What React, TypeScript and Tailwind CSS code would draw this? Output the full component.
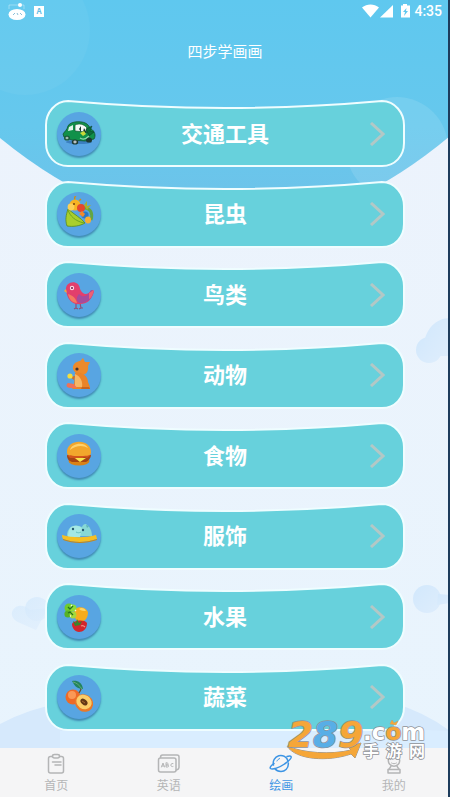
import type { ReactNode } from "react";

type Category = {
  name: string;
  art: ReactNode;
};

type Tab = {
  name: string;
  icon: ReactNode;
  active?: boolean;
};

const CarArt = (
  <>
    <ellipse cx="22" cy="30" rx="13" ry="2" fill="#3b7fbf" />
    <path d="M6 22c2-3 4-4 5-8 2-5 16-6 20-1l3 4c4 2 5 7 3 10l-9 2-13-1-8-3z" fill="#11914a" stroke="#12542f" strokeWidth=".8" />
    <path d="M18 13c4-2 9-1 12 3l-1 4-11-1z" fill="#f4faf8" stroke="#12542f" strokeWidth=".7" />
    <path d="M12 15l4-2v5l-5 1z" fill="#dff3ea" />
    <path d="M22 17l2-3v6zM27 16l3 5-4-1z" fill="#173c2c" />
    <path d="M23 21l4-2 2 3-3 2z" fill="#c8d93a" />
    <path d="M29 17l6-3-2 5 4 1-5 4z" fill="#0c6f3a" stroke="#0b3f24" strokeWidth=".5" />
    <ellipse cx="10" cy="26" rx="3" ry="2.600" fill="#1b5a3c" />
    <ellipse cx="10" cy="26" rx="1.500" ry="1.300" fill="#9dbcae" />
    <ellipse cx="18" cy="30" rx="3.200" ry="2.600" fill="#1d3a30" />
    <ellipse cx="18" cy="30" rx="1.700" ry="1.400" fill="#b8c2c4" />
    <ellipse cx="32" cy="28" rx="3" ry="2.600" fill="#1d3a30" />
    <path d="M23 26c3 2 6 1 9-2" fill="none" stroke="#8fd9ac" strokeWidth="1.200" />
  </>
);

const BugArt = (
  <>
    <path d="M11 17c-2 6-3 11-1 17 6 1 13 0 18-3-4-5-10-8-17-14z" fill="#a9cf2c" stroke="#5b8a1e" strokeWidth=".8" />
    <path d="M11 18c2 6 7 11 16 13" fill="none" stroke="#6fa51f" />
    <path d="M27 16c7 0 9 6 7 12" fill="none" stroke="#63a544" strokeWidth="3" />
    <circle cx="28" cy="23" r="3.600" fill="#2c78c4" />
    <path d="M18 8c-1-3 0-4 1-3M22 9l2-2" fill="none" stroke="#d18c16" strokeWidth="1.300" />
    <circle cx="18" cy="13" r="5.500" fill="#f6b324" />
    <circle cx="14" cy="15" r="3.400" fill="#fdcf55" />
    <circle cx="17" cy="12" r=".9" fill="#67350c" />
    <circle cx="24" cy="16" r="4" fill="#e5472c" />
    <path d="M27 13l3-4v5l4-1-4 5z" fill="#a7b02f" />
    <path d="M25 19l3 3-2 3-4-3z" fill="#f28a2b" />
    <ellipse cx="31" cy="28" rx="3" ry="3.400" fill="#f7ae34" />
  </>
);

const BirdArt = (
  <>
    <path d="M19 30v5l-2 1m2-1l2 1M23 30l1 5-2 1m2-1l2 0" fill="none" stroke="#8d4f78" strokeWidth="1.200" />
    <path d="M9 17c-1-9 13-11 14-1 3 6 7 7 12 1l2 1c-2 9-7 13-14 13-7 1-13-4-14-14z" fill="#e23f6c" />
    <path d="M22 21c4 4 8 3 12-4l3 1c-3 10-8 12-14 12-4-1-4-6-1-9z" fill="#a44c9d" />
    <path d="M32 20l5-3c-1 5-3 8-5 9z" fill="#ef6072" />
    <path d="M11 21c4 1 8 4 9 9-5 0-8-4-9-9z" fill="#f47a60" />
    <path d="M9 16l-2 2 3 2z" fill="#f7a63b" />
    <circle cx="15" cy="15" r="2.200" fill="#fbd9e4" />
    <circle cx="15" cy="15" r="1" fill="#6e1b46" />
  </>
);

const SquirrelArt = (
  <>
    <path d="M18 10c2-1 3-2 5-2l3-3 2 4 5 0-2 4c1 5-2 9-6 9l-6-2c-4-3-4-7-1-10z" fill="#ec8a2b" />
    <path d="M18 20c6-2 13 3 13 9l2 5v2l-17 0c-2-1-1-3 1-4z" fill="#e98429" />
    <path d="M18 21c5 2 8 7 7 13h-7z" fill="#f6b765" />
    <path d="M18 23l-5 1 4 3z" fill="#db7020" />
    <path d="M17 31l-6-1c-3 2-1 5 2 5h7z" fill="#ef7258" />
    <circle cx="13" cy="23" r="2.600" fill="#f5de3d" />
    <circle cx="20" cy="16" r="1.600" fill="#46342f" />
    <path d="M25 34h7l1 2h-9z" fill="#c76520" />
  </>
);

const BurgerArt = (
  <>
    <ellipse cx="22" cy="27" rx="10.500" ry="4.500" fill="#d98217" />
    <path d="M10 21c0 4 2 6 5 7h14c2-1 5-4 5-7z" fill="#a54513" />
    <path d="M10 21c5-2 19-2 24 0l-4 3-3-1-5 4-5-3-4 0z" fill="#d2531c" />
    <path d="M18 24l11 0-6 4z" fill="#f7e64e" />
    <path d="M10 19c-1-15 25-15 24 0 0 3-6 3-12 3s-12 0-12-3z" fill="#f2a62c" />
    <path d="M13 16c1-7 15-9 18-2-5-3-12-3-18 2z" fill="#ffd26c" />
  </>
);

const HatArt = (
  <>
    <path d="M10 22c0-8 6-12 12-10l3 1c1-3 4-4 5-2 3 2 5 6 5 11z" fill="#87d8d6" />
    <path d="M14 13c4-2 9-2 11 2l-2 8H11c0-4 1-8 3-10z" fill="#a4e8e5" />
    <path d="M29 11l3 1-2 2z" fill="#5bb3b8" />
    <circle cx="16" cy="15" r="1.200" fill="#265b72" />
    <circle cx="26" cy="16" r="1.200" fill="#265b72" />
    <path d="M19 18c2 1 3 1 5 0" fill="none" stroke="#62bfc0" />
    <path d="M5 21c11 3 23 3 34 0l1 4c-12 4-23 4-34 0-1-2-1-3-1-4z" fill="#f6bf22" />
    <path d="M6 25c11 4 22 4 34 0v1c-12 4-23 4-34 0z" fill="#c98715" />
  </>
);

const PeppersArt = (
  <>
    <path d="M18 14c4-3 11-2 13 3 0 6-3 9-7 10-6 0-8-7-6-13z" fill="#f7ac1c" />
    <path d="M22 14c2-2 6-1 7 2-2 0-5 0-7-2z" fill="#ffd564" />
    <path d="M15 29c1-4 13-5 15-1 0 6-4 9-8 9-4 0-7-4-7-8z" fill="#d3252d" />
    <path d="M16 26l3 2 1-4 2 4 3-2-2 4-5 1z" fill="#38852b" />
    <circle cx="12" cy="13" r="4.500" fill="#6fcb2c" />
    <circle cx="16" cy="13" r="3.500" fill="#8cdd3b" />
    <circle cx="11" cy="19" r="3.600" fill="#56b226" />
    <circle cx="16" cy="20" r="3.400" fill="#a5d93c" />
    <path d="M11 12l2 2 3-3M11 18l2-1 3 3" fill="none" stroke="#27741b" strokeWidth="1.300" />
    <path d="M24 31c2-1 3 0 4 1" fill="none" stroke="#f58b83" strokeWidth="1.200" />
    <path d="M14 10l1 1M18 15l1 1M13 21l1 0" stroke="#efffcf" strokeWidth="1.400" />
  </>
);

const PeachArt = (
  <>
    <circle cx="16" cy="22" r="7.500" fill="#ee6a27" />
    <circle cx="15" cy="20" r="4" fill="#fa9956" />
    <path d="M22 18c2-3 3-5 2-7" fill="none" stroke="#6a5124" strokeWidth="1.200" />
    <path d="M15 6c5-1 10 1 11 8-5 0-8-2-11-8z" fill="#23845d" />
    <path d="M16 7c4 1 6 3 9 7" fill="none" stroke="#72b67c" strokeWidth=".8" />
    <ellipse cx="27" cy="28" rx="9.500" ry="8.500" transform="rotate(35 27 28)" fill="#e9792a" />
    <ellipse cx="27" cy="27" rx="8" ry="7" transform="rotate(35 27 27)" fill="#fccd69" />
    <ellipse cx="27" cy="27" rx="4" ry="2.700" transform="rotate(42 27 27)" fill="#643816" />
    <path d="M25 26l3 2" stroke="#a96a30" />
  </>
);

const categories: Category[] = [
  { name: "交通工具", art: CarArt },
  { name: "昆虫", art: BugArt },
  { name: "鸟类", art: BirdArt },
  { name: "动物", art: SquirrelArt },
  { name: "食物", art: BurgerArt },
  { name: "服饰", art: HatArt },
  { name: "水果", art: PeppersArt },
  { name: "蔬菜", art: PeachArt },
];

const tabs: Tab[] = [
  {
    name: "首页",
    icon: (
      <>
        <path d="M8 4.500H6.500a2 2 0 0 0-2 2V19a2 2 0 0 0 2 2h11a2 2 0 0 0 2-2V6.500a2 2 0 0 0-2-2H16" />
        <path d="M8.500 4c0-1 1-1.500 2-1.500h3c1 0 2 .5 2 1.500s-1 2-2 2h-3c-1 0-2-1-2-2zM8.500 10H17M11 13h6" />
      </>
    ),
  },
  {
    name: "英语",
    icon: (
      <>
        <rect x="1.500" y="6" width="17.500" height="14" rx="2" />
        <path d="M3.500 5.500c0-1.500.8-2.500 2-2.500h14.500c1.300 0 2 .8 2 2v10.500c0 1.200-1 2-2.500 2.500" />
        <path d="M4.500 15l1.500-4 1.500 4M5 14h2M9 11v4h1.500c1.500 0 1.500-2 0-2H9h1.300c1.300 0 1.300-2 0-2zM16 11.500c-3-1-3 4.300 0 3" strokeWidth="1" />
      </>
    ),
  },
  {
    name: "绘画",
    active: true,
    icon: (
      <>
        <path d="M4.500 13a7.500 7.500 0 0 1 14.500-4M19.300 11c.5 6-4 8.500-7.300 8.500-3 0-5-1.300-6.200-3" />
        <path d="M5 11.500c-3 2-4.500 4-3.500 5 2 1.500 9-1 14-4.500 5-3.300 7.500-6.500 6.500-7.500-.6-.8-2-.5-4 0" />
        <path d="M8 9c.6-1.300 1.500-2 2.600-2.400" strokeWidth="1" />
      </>
    ),
  },
  {
    name: "我的",
    icon: (
      <>
        <circle cx="12" cy="8.500" r="5.700" />
        <path d="M9 14c-.5 1.500-1 2-2.500 3.500M15 14c.5 1.500 1 2 2.500 3.500M6 17.500h12v3.500H6z" />
        <path d="M9.500 11c1.500 1 3.500 1 5 0" strokeWidth="1" />
      </>
    ),
  },
];

function Scenery() {
  return (
    <svg
      aria-hidden="true"
      className="absolute inset-0 h-full w-full"
      viewBox="0 0 450 797"
      preserveAspectRatio="none"
    >
      <defs>
        <linearGradient id="sky" x1="0" y1="0" x2="0" y2="1">
          <stop offset="0" stopColor="#5fc8ef" />
          <stop offset=".55" stopColor="#66c8ed" />
          <stop offset="1" stopColor="#70c1e8" />
        </linearGradient>
        <linearGradient id="ground" x1="0" y1="0" x2="0" y2="1">
          <stop offset="0" stopColor="#edf3fc" />
          <stop offset="1" stopColor="#e8f4fd" />
        </linearGradient>
        <linearGradient id="cloud" x1="0" y1="0" x2="1" y2="1">
          <stop offset="0" stopColor="#d2e8fc" />
          <stop offset="1" stopColor="#deedfc" />
        </linearGradient>
        <clipPath id="dome">
          <path d="M0 0h450v136Q340 228 225 228T0 138z" />
        </clipPath>
      </defs>
      <rect width="450" height="797" fill="url(#ground)" />
      <g clipPath="url(#dome)">
        <rect width="450" height="230" fill="url(#sky)" />
        <circle cx="25" cy="30" r="65" fill="#fff" fillOpacity=".04" />
        <circle cx="397" cy="148" r="51" fill="#fff" fillOpacity=".11" />
      </g>
      <g fill="url(#cloud)">
        <circle cx="429" cy="350" r="13" />
        <path d="M424 343c2-14 12-25 26-25v38h-20z" />
        <circle cx="427" cy="599" r="14" />
        <path d="M438 594l12 1v8l-13 2z" />
        <circle cx="37" cy="609" r="12" opacity=".7" />
        <path d="M12 612c3-8 12-8 18-2l18-2-12 22-16-7c-6-2-9-7-8-11z" opacity=".6" />
      </g>
      <path d="M0 724Q30 708 60 704L390 702Q425 712 450 731V797H0z" fill="#d6e9fc" />
      <path d="M60 731Q230 722 450 731V797H60z" fill="#d9edff" />
    </svg>
  );
}

function StatusBar() {
  return (
    <div className="flex h-[22px] items-center justify-between px-2 text-white">
      <div className="flex items-center gap-2">
        <svg aria-hidden="true" className="h-[18px] w-[18px]" viewBox="0 0 18 18" fill="none">
          <path d="M1 7V3h15v4" stroke="#fff" strokeOpacity=".35" />
          <ellipse cx="9" cy="12.500" rx="8.500" ry="5.500" fill="#fff" />
          <circle cx="12" cy="3" r="2" fill="#fff" />
          <path d="M5 13l2-2M9 11l1 2M12 11l2 2" stroke="#8bbfd8" />
        </svg>
        <span className="grid h-[11px] w-[10px] place-items-center bg-white text-[8px] leading-none font-bold text-[#62bde4]">
          A
        </span>
      </div>
      <div className="flex items-center gap-0.5">
        <svg aria-hidden="true" className="h-[14px] w-[50px]" viewBox="0 0 50 14" fill="#fff">
          <path d="M0 3.500C5-.5 12-.5 17 3.500L8.500 13.500z" />
          <path d="M31 1v12.500H18z" />
          <path fillRule="evenodd" d="M41 1.500V0h4v1.500h3v12h-9v-12zM44.500 4L41 8h2l-1 4 4-5h-2z" />
        </svg>
        <time className="font-['Roboto',sans-serif] text-[14px] leading-[20px] font-medium">4:35</time>
      </div>
    </div>
  );
}

function CategoryCard({ name, art }: Category) {
  return (
    <button type="button" className="relative block h-[67px] w-full cursor-pointer">
      <svg
        aria-hidden="true"
        className="absolute inset-0 h-full w-full"
        viewBox="0 0 360 67"
        preserveAspectRatio="none"
      >
        <path
          d="M23 1Q180 15 337 1C350 1 359 13 359 25V43C359 56 350 66 337 66H23C10 66 1 56 1 43V25C1 13 10 1 23 1Z"
          fill="#67d1dc"
          stroke="#effdff"
          strokeWidth="2"
        />
      </svg>
      <span className="relative grid h-full grid-cols-[44px_1fr_44px] items-center px-3">
        <span className="h-11 w-11 rounded-full bg-[#58a5e2] shadow-[0px_2px_2px_#418bb4]">
          <svg aria-hidden="true" className="h-11 w-11" viewBox="0 0 44 44">
            {art}
          </svg>
        </span>
        <span className="pb-1 text-center text-[22px] leading-[32px] font-bold text-white">{name}</span>
        <svg
          aria-hidden="true"
          className="mr-2 h-6 w-4 justify-self-end"
          viewBox="0 0 16 24"
          fill="none"
          stroke="#b3c8c6"
          strokeWidth="3"
        >
          <path d="M2 1l12 11L2 23" />
        </svg>
      </span>
    </button>
  );
}

function SiteLogo() {
  return (
    <svg
      role="img"
      aria-label="289.com 手游网"
      className="pointer-events-none absolute right-5 bottom-8 h-[60px] w-[148px]"
      viewBox="0 0 148 60"
    >
      <g
        fontFamily="DejaVu Sans, sans-serif"
        fontWeight="700"
        stroke="#8f9297"
        strokeWidth="1.500"
        paintOrder="stroke"
        strokeLinejoin="round"
      >
        <path d="M5 41C21 48 49 50 69 45l-3-3 13-4-6 15-4-4C46 57 14 55 5 41z" fill="#f5a638" strokeWidth="1" />
        <text x="6" y="42" fontSize="36" fontStyle="italic" fill="#f5a638">
          2<tspan fill="#58aee6">8</tspan>9
        </text>
        <text x="81" y="35" fontSize="23" fill="#fff">
          .c<tspan fill="#f5a638">o</tspan>m
        </text>
        <path d="M108 19l2-4 2 3 4-2-2 4z" fill="#f5a638" strokeWidth=".5" />
      </g>
      <g
        fontFamily="Noto Sans CJK SC, sans-serif"
        fontSize="16"
        fontWeight="700"
        fill="#fff"
        stroke="#8f9297"
        strokeWidth="1.500"
        paintOrder="stroke"
      >
        <text x="81" y="52">手</text>
        <text x="104" y="52">游</text>
        <text x="127" y="52">网</text>
      </g>
    </svg>
  );
}

function TabBar() {
  return (
    <nav className="relative grid h-[49px] grid-cols-4 bg-[#f5f5f6]">
      {tabs.map((tab) => (
        <a
          key={tab.name}
          href="#"
          aria-current={tab.active ? "page" : undefined}
          className={
            tab.active
              ? "flex flex-col items-center pt-1 text-[#3c94e4]"
              : "flex flex-col items-center pt-1 text-[#b4b5b6]"
          }
        >
          <svg
            aria-hidden="true"
            className="h-6 w-6"
            viewBox="0 0 24 24"
            fill="none"
            stroke="currentColor"
            strokeWidth="1.500"
            strokeLinecap="round"
            strokeLinejoin="round"
          >
            {tab.icon}
          </svg>
          <span className="text-[12px] leading-[18px]">{tab.name}</span>
        </a>
      ))}
    </nav>
  );
}

export default function App() {
  return (
    <div className="relative flex min-h-screen flex-col overflow-hidden font-['Noto_Sans_CJK_SC',sans-serif]">
      <Scenery />
      <header className="relative h-[100px]">
        <StatusBar />
        <h1 className="mt-[18px] text-center text-[15px] leading-[22px] text-white">四步学画画</h1>
      </header>
      <main className="relative flex flex-1 flex-col px-[45px] pb-[17px]">
        <ul className="flex flex-1 flex-col justify-between">
          {categories.map((category) => (
            <li key={category.name}>
              <CategoryCard {...category} />
            </li>
          ))}
        </ul>
      </main>
      <TabBar />
      <SiteLogo />
      <div aria-hidden="true" className="absolute inset-y-0 right-0 w-0.5 bg-[#1d3c5c]" />
    </div>
  );
}
